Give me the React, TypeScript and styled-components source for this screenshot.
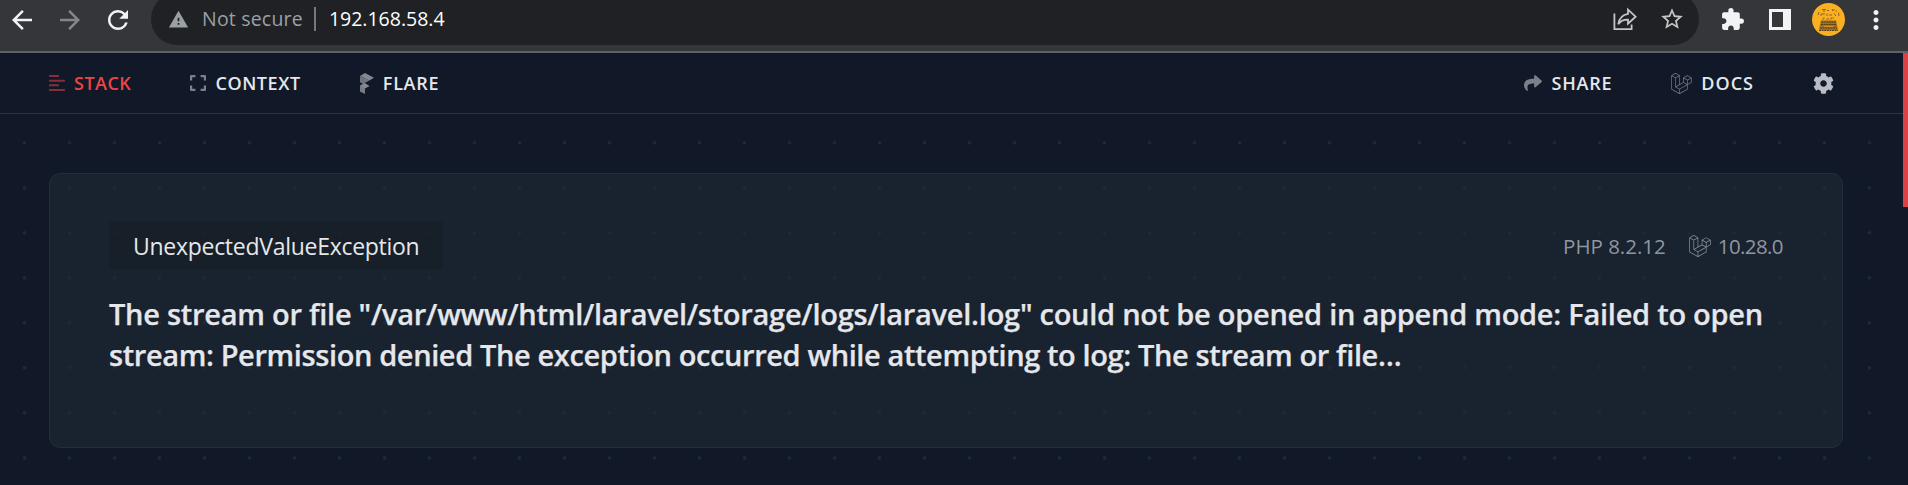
import React from "react";
import styled, { createGlobalStyle } from "styled-components";
import {
  MdArrowBack,
  MdArrowForward,
  MdExtension,
  MdMoreVert,
  MdRefresh,
  MdStarBorder,
  MdWarning,
} from "react-icons/md";
import { FaCog, FaLaravel, FaShare } from "react-icons/fa";

const GlobalStyle = createGlobalStyle`
  *, *::before, *::after { box-sizing: border-box; }
  body {
    margin: 0;
    background: #111827;
    font-family: "Open Sans", "Noto Sans", sans-serif;
    overflow: hidden;
  }
  svg { display: block; flex: none; }
`;

const Screen = styled.div`
  width: 1908px;
  height: 485px;
  display: flex;
  flex-direction: column;
  overflow: hidden;
`;

/* Browser toolbar */

const BrowserBar = styled.header`
  flex: none;
  height: 53px;
  display: flex;
  align-items: flex-start;
  background: #35363a;
  border-bottom: 2px solid #606165;
  overflow: hidden;
`;

const HistoryButtons = styled.div`
  width: 151px;
  height: 39px;
  padding-left: 7px;
  display: flex;
  align-items: center;
  gap: 18px;
`;

const ToolbarButton = styled.button<{ $dim?: boolean }>`
  border: 0;
  padding: 0;
  background: none;
  display: flex;
  color: ${(p) => (p.$dim ? "#85868a" : "#f1f3f4")};
`;

const AddressBar = styled.div`
  width: 1548px;
  height: 52px;
  margin-top: -7px;
  padding: 0 14px 0 17px;
  display: flex;
  align-items: center;
  background: #202124;
  border-radius: 26px;
  color: #9aa0a6;
  font-size: 19.5px;
  line-height: 26px;
  white-space: nowrap;
`;

const SecurityLabel = styled.span`
  margin-left: 13px;
  letter-spacing: 0.2px;
`;

const Separator = styled.span`
  width: 2px;
  height: 24px;
  margin: 0 13px 0 11px;
  background: #76787b;
`;

const Address = styled.span`
  flex: 1;
  color: #ffffff;
`;

const AddressActions = styled.div`
  display: flex;
  align-items: center;
  gap: 22px;
  color: #c4c5c7;
`;

const BrowserActions = styled.div`
  height: 39px;
  padding-left: 21px;
  display: flex;
  align-items: center;
  color: #f1f3f4;
`;

const SidePanelIcon = styled.span`
  width: 22px;
  height: 21px;
  margin-left: 24px;
  border: 3px solid #f1f3f4;
  border-right-width: 8px;
`;

const Avatar = styled.span`
  display: flex;
  margin: 0 16px 0 21px;
`;

/* Page */

const Page = styled.div`
  flex: 1;
  position: relative;
  display: flex;
  flex-direction: column;
`;

const ProgressMarker = styled.div`
  position: absolute;
  top: 0;
  right: 0;
  width: 5px;
  height: 154px;
  background: #dd4045;
`;

const Nav = styled.nav`
  flex: none;
  height: 61px;
  padding: 0 74px 0 49px;
  display: flex;
  align-items: center;
  justify-content: space-between;
  background: #111827;
  border-bottom: 1px solid #2b3545;
`;

const NavGroup = styled.div`
  display: flex;
  align-items: center;
  gap: 59px;
`;

const NavLink = styled.a<{ $active?: boolean; $gap: number; $spacing: number }>`
  display: flex;
  align-items: center;
  gap: ${(p) => p.$gap}px;
  color: ${(p) => (p.$active ? "#ef4444" : "#e5e7eb")};
  font-size: 18px;
  font-weight: 600;
  line-height: 24px;
  letter-spacing: ${(p) => p.$spacing}px;

  svg {
    color: ${(p) => (p.$active ? "#842f3b" : "#7c8089")};
  }
`;

const SettingsButton = styled.button`
  border: 0;
  padding: 0;
  background: none;
  display: flex;
  color: #b9bcc4;
`;

const Main = styled.main`
  flex: 1;
  padding: 59px 65px 0 49px;
  background-color: #111827;
  background-image: radial-gradient(
    circle at center,
    #202938 0,
    #202938 1.4px,
    transparent 2.2px
  );
  background-size: 45px 45px;
  background-position: 2px 6.3px;
`;

const ErrorCard = styled.section`
  height: 275px;
  padding: 47px 59px 0;
  display: flex;
  flex-direction: column;
  background: rgba(30, 40, 53, 0.62);
  border: 1px solid #232d3b;
  border-radius: 11px;
`;

const CardTop = styled.div`
  display: flex;
  justify-content: space-between;
  align-items: center;
`;

const ExceptionBadge = styled.div`
  width: 334px;
  height: 48px;
  padding: 1px 0 0 24px;
  display: flex;
  align-items: center;
  border-radius: 3px;
  background: rgba(22, 27, 34, 0.5);
  color: #e5e7eb;
  font-size: 23px;
  line-height: 32px;
  letter-spacing: -0.28px;
`;

const Versions = styled.div`
  display: flex;
  align-items: center;
  color: #8f96a1;
  font-size: 20.5px;
  line-height: 28px;
  padding-top: 1px;
`;

const FrameworkVersion = styled.span`
  display: flex;
  align-items: center;
  gap: 7px;
  margin-left: 23px;
  letter-spacing: -0.6px;
`;

const Message = styled.h1`
  margin: 24px 0 0;
  color: #e5e7eb;
  font-size: 29px;
  font-weight: 600;
  line-height: 41px;
  -webkit-text-stroke: 0.25px currentColor;
`;

const MessageLine = styled.span<{ $spacing: number }>`
  display: block;
  white-space: nowrap;
  letter-spacing: ${(p) => p.$spacing}px;
`;

/* Icons */

const ShareOutIcon = () => (
  <svg width="24" height="24" viewBox="0 0 24 24" fill="none" stroke="currentColor" strokeWidth="1.8">
    <path d="M1.4 6.5V22.1H18.6V17.5" />
    <path d="M15 2.6L22.6 9.7L15 16.6V12.6C10.6 12.4 7.6 13.8 5.3 17.2C6.2 11.6 9.3 7.7 15 6.9Z" />
  </svg>
);

const StackIcon = () => (
  <svg width="16" height="16" viewBox="0 0 16 16" fill="currentColor">
    <rect width="10" height="2" rx=".5" />
    <rect y="4.7" width="16" height="2" rx=".5" />
    <rect y="9.3" width="10" height="2" rx=".5" />
    <rect y="14" width="16" height="2" rx=".5" />
  </svg>
);

const ContextIcon = () => (
  <svg width="16" height="16" viewBox="0 0 16 16" fill="none" stroke="currentColor" strokeWidth="2.2" strokeLinejoin="round">
    <path d="M1.1 5.4V1.1H5.4M10.6 1.1H14.9V5.4M14.9 10.6V14.9H10.6M5.4 14.9H1.1V10.6" />
  </svg>
);

const FlareIcon = () => (
  <svg width="14" height="21" viewBox="0 0 14 21">
    <path d="M0 3L5 0L14 4.8L9.3 7.4Z" fill="#858891" />
    <path d="M0 3L5 5.6V17.8L0 15.2V12.5L3 11L0 9.3Z" fill="#6f737e" />
    <path d="M5 5.3L9.3 7.4L5 9.8Z" fill="#747882" />
    <path d="M0 12.6L5 10.3L9.6 13L5 15.6Z" fill="#858891" />
    <path d="M0 13.2L5 15.6V21L0 18.6Z" fill="#777b85" />
  </svg>
);

const TypewriterAvatar = () => (
  <svg width="33" height="33" viewBox="0 0 33 33" fill="none">
    <circle cx="16.5" cy="16.5" r="16.5" fill="#fbb021" />
    <g stroke="#8a6423" strokeWidth="1">
      <path d="M10 6.5H14M12 6.5V9M15 7.5H17M20 6L21 8L22.5 6M23.5 8H25" />
      <path d="M9 11H13M9 11V13M15 10.5V13M17 12H20M22 10.5L24 13M7 9L6 12M26.5 9.5L27 13" />
      <path d="M11 17V15H13M14.5 17L16 15L17 17M19 15H22M19 15V17" strokeDasharray="1.6 .5" />
    </g>
    <path d="M9 17.5H24L25 21.5L26 27H7L8 21.5Z" fill="#a0701f" />
    <path d="M9 19H24M9 21.5H24M8 25H25M7 27.5H26" stroke="#4f3d22" strokeWidth="1.1" strokeDasharray="2 .6" />
    <path d="M12 23.3H21" stroke="#e29d20" strokeWidth="1" />
  </svg>
);

export default function App() {
  return (
    <Screen>
      <GlobalStyle />
      <BrowserBar>
        <HistoryButtons>
          <ToolbarButton aria-label="Back"><MdArrowBack size={30} /></ToolbarButton>
          <ToolbarButton aria-label="Forward" $dim><MdArrowForward size={30} /></ToolbarButton>
          <ToolbarButton aria-label="Reload"><MdRefresh size={30} /></ToolbarButton>
        </HistoryButtons>
        <AddressBar>
          <MdWarning size={21} />
          <SecurityLabel>Not secure</SecurityLabel>
          <Separator />
          <Address>192.168.58.4</Address>
          <AddressActions>
            <ShareOutIcon />
            <MdStarBorder size={26} />
          </AddressActions>
        </AddressBar>
        <BrowserActions>
          <MdExtension size={25} />
          <SidePanelIcon />
          <Avatar><TypewriterAvatar /></Avatar>
          <MdMoreVert size={30} />
        </BrowserActions>
      </BrowserBar>

      <Page>
        <Nav>
          <NavGroup>
            <NavLink $active $gap={9} $spacing={0.5}><StackIcon />STACK</NavLink>
            <NavLink $gap={9} $spacing={0.6}><ContextIcon />CONTEXT</NavLink>
            <NavLink $gap={9} $spacing={0.7}><FlareIcon />FLARE</NavLink>
          </NavGroup>
          <NavGroup>
            <NavLink $gap={9} $spacing={0.8}><FaShare size={18} />SHARE</NavLink>
            <NavLink $gap={9} $spacing={1}><FaLaravel size={21} />DOCS</NavLink>
            <SettingsButton aria-label="Settings"><FaCog size={21} /></SettingsButton>
          </NavGroup>
        </Nav>

        <Main>
          <ErrorCard>
            <CardTop>
              <ExceptionBadge>UnexpectedValueException</ExceptionBadge>
              <Versions>
                <span>PHP 8.2.12</span>
                <FrameworkVersion><FaLaravel size={22} />10.28.0</FrameworkVersion>
              </Versions>
            </CardTop>
            <Message>
              <MessageLine $spacing={-0.26}>
                The stream or file "/var/www/html/laravel/storage/logs/laravel.log" could not be opened in append mode: Failed to open
              </MessageLine>
              <MessageLine $spacing={-0.39}>
                stream: Permission denied The exception occurred while attempting to log: The stream or file…
              </MessageLine>
            </Message>
          </ErrorCard>
        </Main>
        <ProgressMarker />
      </Page>
    </Screen>
  );
}
